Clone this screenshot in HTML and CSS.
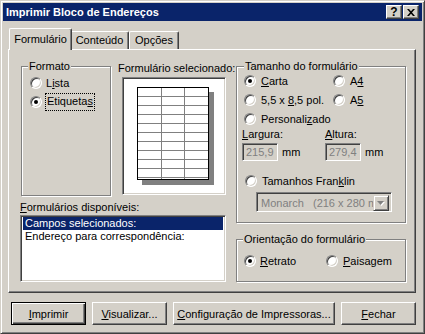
FILE: index.html
```html
<!DOCTYPE html>
<html lang="pt">
<head>
  <meta charset="UTF-8" />
  <title>Imprimir Bloco de Endereços</title>
  <link rel="stylesheet" href="styles.css">
</head>
<body>
  <div class="window">
    <div class="titlebar">
      <span class="title">Imprimir Bloco de Endereços</span>
      <div class="title-btns">
        <span class="tbtn help">?</span>
        <span class="tbtn">
          <svg width="8" height="7" viewBox="0 0 8 7"><path d="M0 0h2l2 2.3 2-2.3h2l-3 3.5 3 3.5h-2l-2-2.3-2 2.3h-2l3-3.5z" fill="#000"/></svg>
        </span>
      </div>
    </div>

    <div class="client">
      <div class="tabs">
        <div class="tab active">Formulário</div>
        <div class="tab tab-2">Conteúdo</div>
        <div class="tab tab-3">Opções</div>
      </div>

      <div class="panel">
        <div class="col-left">
          <div class="top-row">
            <fieldset class="group formato">
              <legend>Formato</legend>
              <label class="radio"><span class="radio-btn"></span><span>L<u>i</u>sta</span></label>
              <label class="radio checked"><span class="radio-btn"></span><span class="focus">Etiqueta<u>s</u></span></label>
            </fieldset>
            <div class="preview">
              <div class="caption preview-caption">Formulário selecionado:</div>
              <div class="preview-box">
                <div class="page"></div>
              </div>
            </div>
          </div>
          <div class="caption list-caption"><u>F</u>ormulários disponíveis:</div>
          <div class="listbox">
            <div class="list-item selected">Campos selecionados:</div>
            <div class="list-item">Endereço para correspondência:</div>
          </div>
        </div>

        <div class="col-right">
          <fieldset class="group tamanho">
            <legend>Tamanho do formulário</legend>
            <div class="size-grid">
              <label class="radio checked"><span class="radio-btn"></span><span><u>C</u>arta</span></label>
              <label class="radio"><span class="radio-btn"></span><span>A<u>4</u></span></label>
              <label class="radio"><span class="radio-btn"></span><span>5,5 x <u>8</u>,5 pol.</span></label>
              <label class="radio"><span class="radio-btn"></span><span>A<u>5</u></span></label>
              <label class="radio"><span class="radio-btn"></span><span>Personali<u>z</u>ado</span></label>
            </div>
            <div class="dims">
              <div class="caption"><u>L</u>argura:</div>
              <div class="caption"><u>A</u>ltura:</div>
              <div class="dim-field"><span class="edit">215,9</span><span>mm</span></div>
              <div class="dim-field"><span class="edit">279,4</span><span>mm</span></div>
            </div>
            <label class="radio franklin"><span class="radio-btn"></span><span>Tamanhos Fran<u>k</u>lin</span></label>
            <div class="combo">
              <span class="combo-text">Monarch   (216 x 280 mm)</span>
              <span class="combo-btn">
                <svg width="8" height="5" viewBox="0 0 8 5"><path d="M1 1h7l-3.5 4z" fill="#fff"/><path d="M0 0h7l-3.5 4z" fill="#808080"/></svg>
              </span>
            </div>
          </fieldset>

          <fieldset class="group orient">
            <legend>Orientação do formulário</legend>
            <div class="orient-row">
              <label class="radio checked"><span class="radio-btn"></span><span><u>R</u>etrato</span></label>
              <label class="radio"><span class="radio-btn"></span><span><u>P</u>aisagem</span></label>
            </div>
          </fieldset>
        </div>
      </div>

      <div class="buttons">
        <button class="btn default"><u>I</u>mprimir</button>
        <button class="btn"><u>V</u>isualizar...</button>
        <button class="btn wide"><u>C</u>onfiguração de Impressoras...</button>
        <button class="btn"><u>F</u>echar</button>
      </div>
    </div>
  </div>
</body>
</html>
```

FILE: styles.css
```css
* {
  box-sizing: border-box;
}

body {
  margin: 0;
  background: #d4d0c8;
  font-family: "Liberation Sans", Arial, sans-serif;
  font-size: 11px;
  color: #000;
}

u {
  text-underline-offset: 1px;
}

.window {
  width: 425px;
  height: 334px;
  background: #d4d0c8;
  border: 1px solid;
  border-color: #d4d0c8 #404040 #404040 #d4d0c8;
  box-shadow: inset 1px 1px #fff, inset -1px -1px #808080;
  padding: 2px;
}

/* title bar */
.titlebar {
  height: 18px;
  margin-bottom: 1px;
  padding: 0 3px 0 3px;
  background: #0a246a;
  color: #fff;
  display: flex;
  align-items: center;
  justify-content: space-between;
}

.title {
  font-weight: bold;
}

.title-btns {
  display: flex;
  gap: 1px;
}

.tbtn {
  width: 16px;
  height: 14px;
  background: #d4d0c8;
  border: 1px solid;
  border-color: #fff #404040 #404040 #fff;
  box-shadow: inset -1px -1px #808080;
  display: flex;
  align-items: center;
  justify-content: center;
  color: #000;
  font-weight: bold;
  font-size: 12px;
  line-height: 12px;
}

.tbtn svg {
  margin-top: 1px;
}

/* tabs */
.client {
  padding: 6px 0 0 5px;
}

.tabs {
  display: flex;
  align-items: flex-end;
  height: 21px;
  padding-left: 1px;
}

.tab {
  height: 18px;
  border: 1px solid;
  border-color: #fff #404040 transparent #fff;
  border-bottom: none;
  border-radius: 2px 2px 0 0;
  box-shadow: inset -1px 0 #808080;
  text-align: center;
  line-height: 17px;
}

.tab.active {
  width: 63px;
  height: 22px;
  line-height: 20px;
  margin: 0 -2px -1px 0;
  position: relative;
  z-index: 1;
  background: #d4d0c8;
}

.tab-2 {
  width: 59px;
}

.tab-3 {
  width: 50px;
}

.panel {
  width: 408px;
  height: 244px;
  border: 1px solid;
  border-color: #fff #404040 #404040 #fff;
  box-shadow: inset -1px -1px #808080;
  display: flex;
  gap: 10px;
  padding: 10px 0 0 11px;
}

/* group boxes */
.group {
  margin: 0;
  padding: 0 7px;
  min-width: 0;
  border: 1px solid #808080;
  box-shadow: inset 1px 1px #fff, 1px 1px #fff;
}

.group legend {
  margin-left: 0;
  padding: 0 1px;
  line-height: 13px;
  background: #d4d0c8;
}

.caption {
  line-height: 13px;
}

.radio {
  display: flex;
  align-items: center;
  height: 19px;
  gap: 5px;
  white-space: nowrap;
}

.radio-btn {
  width: 12px;
  height: 12px;
  flex: none;
  position: relative;
  border-radius: 50%;
  border: 1px solid;
  border-color: #808080 #fff #fff #808080;
  background: #fff;
  box-shadow: inset 1px 1px #404040, inset -1px -1px #d4d0c8;
}

.checked .radio-btn::after {
  content: "";
  position: absolute;
  left: 3px;
  top: 3px;
  width: 4px;
  height: 4px;
  border-radius: 50%;
  background: #000;
}

/* left column */
.col-left {
  width: 206px;
}

.top-row {
  display: flex;
  height: 136px;
}

.formato {
  width: 90px;
  margin-left: 1px;
  padding: 0 0 0 8px;
}

.formato legend {
  margin-left: -2px;
}

.formato .radio {
  gap: 4px;
}

.focus {
  padding: 1px 1px 2px;
  outline: 1px dotted #000;
  line-height: 13px;
}

.preview {
  margin-left: 7px;
  width: 108px;
}

.preview-caption {
  padding-top: 2px;
  white-space: nowrap;
}

.preview-box,
.listbox,
.edit,
.combo {
  border: 1px solid;
  border-color: #808080 #fff #fff #808080;
  box-shadow: inset 1px 1px #404040, inset -1px -1px #d4d0c8;
}

.preview-box {
  margin: 2px 0 0 4px;
  width: 104px;
  height: 118px;
  background: #fff;
  padding: 9px 0 0 14px;
}

.page {
  width: 72px;
  height: 93px;
  border: 1px solid #000;
  background-color: #fff;
  background-image:
    linear-gradient(to right, transparent 23px, #808080 23px, #808080 24px, transparent 24px, transparent 46px, #808080 46px, #808080 47px, transparent 47px),
    repeating-linear-gradient(to bottom, transparent 0 8px, #808080 8px 9px);
  box-shadow: 5px 5px 0 #808080;
}

.list-caption {
  margin-top: 5px;
}

.listbox {
  margin-top: 1px;
  height: 67px;
  background: #fff;
  padding: 1px 2px;
}

.list-item {
  line-height: 13px;
  padding-left: 2px;
  white-space: nowrap;
}

.list-item.selected {
  background: #0a246a;
  color: #fff;
}

/* right column */
.col-right {
  width: 170px;
}

.tamanho {
  padding-bottom: 10px;
}

.size-grid {
  display: grid;
  grid-template-columns: 89px auto;
  margin-top: -2px;
}

.dims {
  display: grid;
  grid-template-columns: 83px auto;
  margin-left: -2px;
}

.dim-field {
  display: flex;
  align-items: center;
  gap: 4px;
  margin-top: 2px;
}

.edit {
  width: 36px;
  height: 18px;
  padding-left: 3px;
  line-height: 16px;
  color: #808080;
  background: #d4d0c8;
}

.franklin {
  margin: 10px 0 0 1px;
}

.combo {
  margin: 2px 0 0 12px;
  width: 136px;
  height: 20px;
  padding: 2px;
  display: flex;
  background: #d4d0c8;
}

.combo-text {
  flex: 1;
  overflow: hidden;
  white-space: pre;
  color: #808080;
  line-height: 16px;
  padding-left: 2px;
}

.combo-btn {
  width: 16px;
  height: 16px;
  border: 1px solid;
  border-color: #d4d0c8 #404040 #404040 #d4d0c8;
  box-shadow: inset 1px 1px #fff, inset -1px -1px #808080;
  display: flex;
  align-items: center;
  justify-content: center;
}

.orient {
  margin-top: 10px;
  padding-bottom: 11px;
}

.orient legend {
  margin-left: -1px;
}

.orient-row {
  display: grid;
  grid-template-columns: 82px auto;
  margin-top: 5px;
}

.orient-row .radio:first-child {
  gap: 4px;
}

/* bottom buttons */
.buttons {
  display: flex;
  gap: 6px;
  margin: 9px 0 0 3px;
}

.btn {
  width: 75px;
  height: 23px;
  padding: 0;
  font: inherit;
  color: #000;
  background: #d4d0c8;
  border: 1px solid;
  border-color: #fff #404040 #404040 #fff;
  box-shadow: inset -1px -1px #808080;
}

.btn.default {
  border-color: #000;
  box-shadow: inset 1px 1px #fff, inset -1px -1px #404040, inset -2px -2px #808080;
}

.btn.wide {
  width: 162px;
}
```
